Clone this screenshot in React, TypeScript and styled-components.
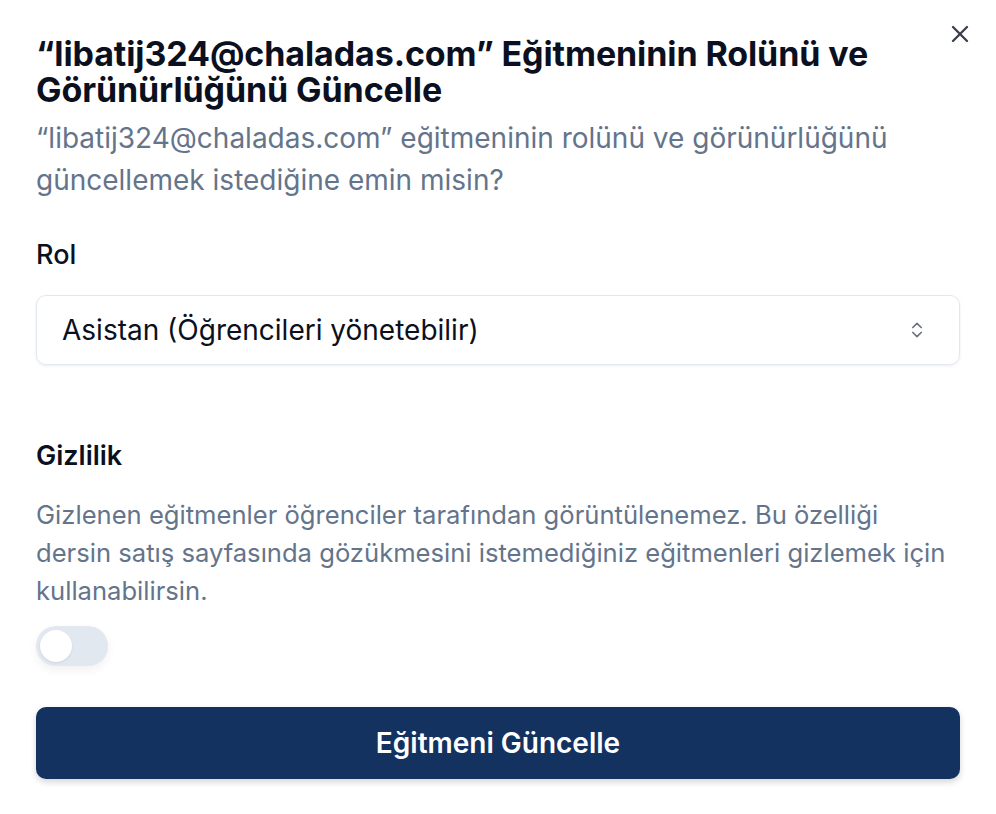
import React, {FC, useState} from 'react';
import styled, {createGlobalStyle} from 'styled-components';
import {X, ChevronsUpDown} from 'lucide-react';

const GlobalStyle = createGlobalStyle`
  * { box-sizing: border-box; }
  body {
    margin: 0;
    background: #ffffff;
    font-family: Inter, "Noto Sans", sans-serif;
  }
`;

const Dialog = styled.div`
  position: relative;
  width: 996px;
  min-height: 814px;
  padding: 36px 36px 0 36px;
  background: #ffffff;
`;

const CloseButton = styled.button`
  position: absolute;
  top: 20px;
  right: 22px;
  width: 28px;
  height: 28px;
  padding: 0;
  border: none;
  background: transparent;
  color: #3a3f4b;
  display: flex;
  align-items: center;
  justify-content: center;
  cursor: pointer;
`;

const Title = styled.h2`
  margin: 0;
  padding-right: 60px;
  font-size: 34px;
  line-height: 36px;
  font-weight: 700;
  letter-spacing: -0.1px;
  color: #0b1020;
`;

const Subtitle = styled.p`
  margin: 9px 0 0;
  font-size: 28px;
  line-height: 42px;
  color: #64748b;
`;

const Section = styled.div<{ $top: number }>`
  margin-top: ${p => p.$top}px;
`;

const Label = styled.div<{ $weight: number }>`
  font-size: 27px;
  line-height: 36px;
  font-weight: ${p => p.$weight};
  color: #0b1020;
`;

const SelectBox = styled.div`
  margin-top: 22px;
  height: 70px;
  border: 1.5px solid #e2e8f0;
  border-radius: 10px;
  box-shadow: 0 1px 3px rgba(15, 23, 42, 0.08);
  display: flex;
  align-items: center;
  justify-content: space-between;
  padding: 0 32px 0 25px;
  font-size: 28px;
  color: #0b1020;
  cursor: pointer;
`;

const Hint = styled.p`
  margin: 22px 0 0;
  font-size: 25.6px;
  line-height: 38px;
  color: #64748b;
`;

const Track = styled.button<{ $on: boolean }>`
  margin-top: 16px;
  width: 72px;
  height: 40px;
  padding: 4px;
  border: none;
  border-radius: 20px;
  background: ${p => (p.$on ? '#143260' : '#e2e8f0')};
  box-shadow: 0 4px 10px rgba(15, 23, 42, 0.06);
  display: flex;
  justify-content: ${p => (p.$on ? 'flex-end' : 'flex-start')};
  cursor: pointer;
`;

const Thumb = styled.span`
  width: 32px;
  height: 32px;
  border-radius: 50%;
  background: #ffffff;
  box-shadow: 0 1px 2px rgba(15, 23, 42, 0.1);
`;

const Submit = styled.button`
  display: block;
  width: 100%;
  margin-top: 41px;
  height: 72px;
  border: none;
  border-radius: 10px;
  background: #143260;
  box-shadow: 0 3px 6px rgba(15, 23, 42, 0.18);
  color: #ffffff;
  font-family: inherit;
  font-size: 28px;
  font-weight: 600;
  cursor: pointer;
`;

const App: FC = () => {
    const [hidden, setHidden] = useState(false);
    const email = 'libatij324@chaladas.com';

    return <>
        <GlobalStyle/>
        <Dialog>
            <CloseButton aria-label="Kapat">
                <X size={28} strokeWidth={2}/>
            </CloseButton>
            <Title>“{email}” Eğitmeninin Rolünü ve Görünürlüğünü Güncelle</Title>
            <Subtitle>“{email}” eğitmeninin rolünü ve görünürlüğünü güncellemek istediğine emin misin?</Subtitle>

            <Section $top={36}>
                <Label $weight={500}>Rol</Label>
                <SelectBox>
                    <span>Asistan (Öğrencileri yönetebilir)</span>
                    <ChevronsUpDown size={20} color="#6b7280" strokeWidth={2}/>
                </SelectBox>
            </Section>

            <Section $top={73}>
                <Label $weight={600}>Gizlilik</Label>
                <Hint>
                    Gizlenen eğitmenler öğrenciler tarafından görüntülenemez. Bu özelliği dersin satış sayfasında
                    gözükmesini istemediğiniz eğitmenleri gizlemek için kullanabilirsin.
                </Hint>
                <Track $on={hidden} onClick={() => setHidden(!hidden)}>
                    <Thumb/>
                </Track>
            </Section>

            <Submit>Eğitmeni Güncelle</Submit>
        </Dialog>
    </>;
};

export default App;
